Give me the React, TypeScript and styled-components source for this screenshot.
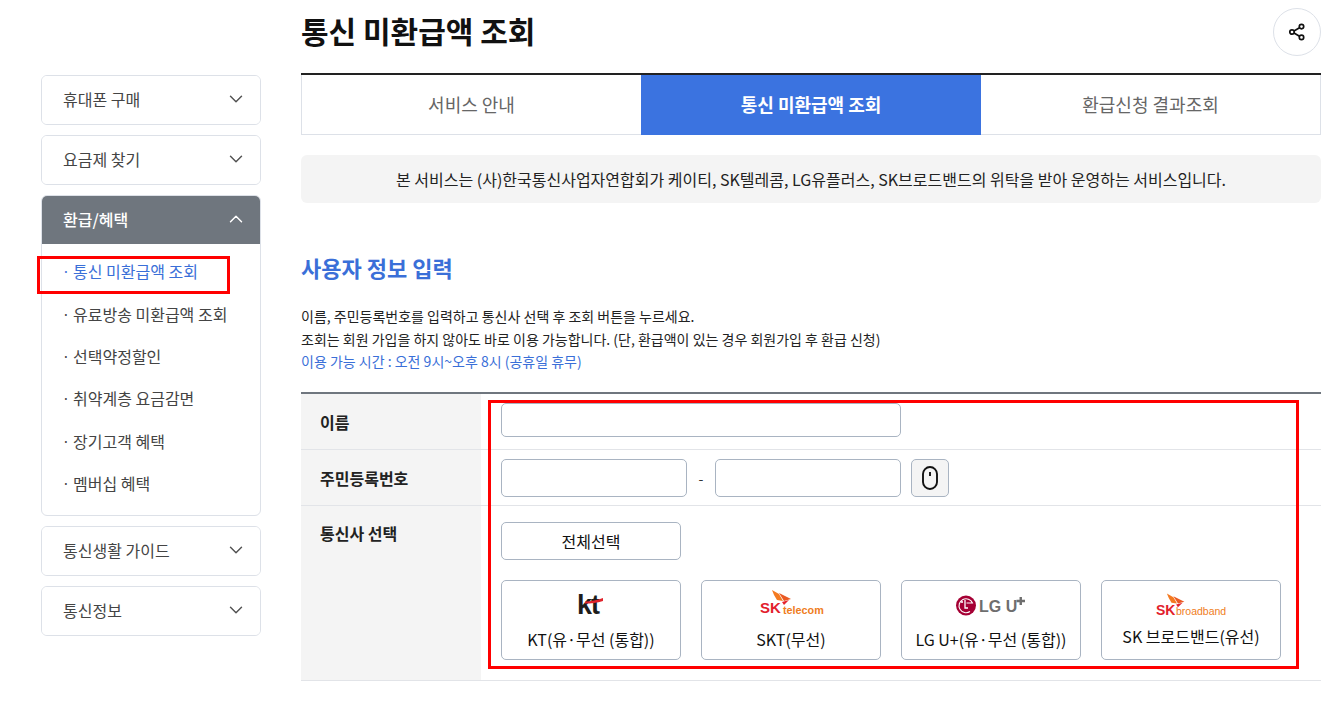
import React from "react";
import styled, { createGlobalStyle } from "styled-components";
import { ChevronDown, ChevronUp } from "lucide-react";

const GlobalStyle = createGlobalStyle`
  html, body {
    margin: 0;
    padding: 0;
    background: #fff;
    overflow: hidden;
  }
  * {
    box-sizing: border-box;
  }
  body {
    font-family: "Noto Sans CJK KR", "Noto Sans", sans-serif;
    color: #111;
  }
`;

const Page = styled.div`
  position: relative;
  display: flex;
  align-items: flex-start;
  width: 1336px;
  height: 708px;
  padding-left: 41px;
  overflow: hidden;
`;

const Sidebar = styled.nav`
  width: 220px;
  margin-top: 75px;
  margin-right: 40px;
  display: flex;
  flex-direction: column;
  gap: 10px;
  flex-shrink: 0;
`;

const MenuGroup = styled.div`
  border: 1px solid #dde1e8;
  border-radius: 6px;
  overflow: hidden;
`;

const MenuHead = styled.div<{ $open?: boolean }>`
  height: 48px;
  display: flex;
  align-items: center;
  justify-content: space-between;
  padding: 0 13px 2px 21px;
  font-size: 16px;
  font-weight: ${(p) => (p.$open ? 500 : 400)};
  background: ${(p) => (p.$open ? "#6f767e" : "#fff")};
  color: ${(p) => (p.$open ? "#fff" : "#444")};
`;

const SubList = styled.ul`
  list-style: none;
  margin: 0;
  padding: 6.2px 0 10.8px;
`;

const SubItem = styled.li<{ $active?: boolean }>`
  height: 42.3px;
  display: flex;
  align-items: center;
  padding-left: 20px;
  font-size: 16px;
  color: ${(p) => (p.$active ? "#3a6fd8" : "#444")};

  &::before {
    content: "·";
    width: 11px;
    font-size: 14px;
  }
`;

const Main = styled.main`
  width: 1020px;
  flex-shrink: 0;
`;

const TitleRow = styled.div`
  height: 73px;
  display: flex;
  justify-content: space-between;
  align-items: flex-start;
`;

const Title = styled.h1`
  margin: 6px 0 0;
  font-size: 30px;
  line-height: 48px;
  font-weight: 700;
  color: #111;
`;

const ShareButton = styled.button`
  width: 48px;
  height: 48px;
  margin-top: 8px;
  padding: 0;
  border: 1px solid #dde1e8;
  border-radius: 50%;
  background: #fff;
  display: flex;
  align-items: center;
  justify-content: center;
`;

const Tabs = styled.div`
  display: grid;
  grid-template-columns: repeat(3, 1fr);
  height: 62px;
  border-top: 2px solid #222;
`;

const Tab = styled.div<{ $active?: boolean; $first?: boolean; $last?: boolean }>`
  display: flex;
  align-items: center;
  justify-content: center;
  padding-bottom: 1px;
  font-size: 18px;
  font-weight: ${(p) => (p.$active ? 700 : 400)};
  color: ${(p) => (p.$active ? "#fff" : "#666")};
  background: ${(p) => (p.$active ? "#3b73e0" : "#fff")};
  border-bottom: 1px solid ${(p) => (p.$active ? "#3b73e0" : "#dde1e8")};
  border-left: ${(p) => (p.$first ? "1px solid #dde1e8" : "none")};
  border-right: ${(p) => (p.$last ? "1px solid #dde1e8" : "none")};
`;

const Notice = styled.div`
  margin-top: 20px;
  height: 48px;
  border-radius: 6px;
  background: #f4f4f4;
  display: flex;
  align-items: center;
  justify-content: center;
  font-size: 16px;
  color: #222;
`;

const SectionTitle = styled.h2`
  margin: 46px 0 0;
  font-size: 22px;
  line-height: 36px;
  font-weight: 700;
  color: #3a6fd8;
`;

const Guide = styled.div`
  margin-top: 20px;
  font-size: 14px;
  line-height: 23px;
  color: #222;
`;

const GuideTime = styled.div`
  line-height: 21px;
  color: #3a6fd8;
`;

const FormTable = styled.div`
  margin-top: 20px;
  border-top: 2px solid #6f767e;
  border-bottom: 1px solid #e2e4e8;
`;

const FormRow = styled.div<{ $height: number; $last?: boolean }>`
  display: flex;
  height: ${(p) => p.$height}px;
  border-bottom: ${(p) => (p.$last ? "none" : "1px solid #e2e4e8")};
`;

const RowLabel = styled.div<{ $top?: boolean }>`
  width: 180px;
  padding-left: 19px;
  background: #f4f4f4;
  display: flex;
  align-items: ${(p) => (p.$top ? "flex-start" : "center")};
  padding-top: ${(p) => (p.$top ? "15px" : "0")};
  font-size: 16px;
  font-weight: 700;
  color: #222;
`;

const RowBody = styled.div<{ $raise?: number }>`
  flex: 1;
  padding-left: 20px;
  padding-bottom: ${(p) => p.$raise ?? 0}px;
  display: flex;
  align-items: center;
`;

const TextInput = styled.div<{ $width: number; $height: number }>`
  width: ${(p) => p.$width}px;
  height: ${(p) => p.$height}px;
  border: 1px solid #a9b4c2;
  border-radius: 5px;
  background: #fff;
`;

const Dash = styled.span`
  width: 28px;
  text-align: center;
  font-size: 14px;
  color: #333;
`;

const KeypadButton = styled.div`
  width: 38px;
  height: 38px;
  margin-left: 10px;
  border: 1px solid #a9b4c2;
  border-radius: 5px;
  background: #f4f4f4;
  display: flex;
  align-items: center;
  justify-content: center;
`;

const CarrierBody = styled.div`
  flex: 1;
  padding: 16px 0 0 20px;
`;

const SelectAll = styled.div`
  width: 180px;
  height: 38px;
  border: 1px solid #a9b4c2;
  border-radius: 5px;
  display: flex;
  align-items: center;
  justify-content: center;
  font-size: 16px;
  color: #111;
`;

const CarrierGrid = styled.div`
  margin-top: 20px;
  display: flex;
  gap: 20px;
`;

const CarrierCard = styled.div`
  width: 180px;
  height: 80px;
  border: 1px solid #a9b4c2;
  border-radius: 5px;
  display: flex;
  flex-direction: column;
  align-items: center;
`;

const LogoSlot = styled.div<{ $height: number }>`
  height: ${(p) => p.$height}px;
  display: flex;
  align-items: center;
  justify-content: center;
`;

const CarrierName = styled.div`
  font-size: 16px;
  line-height: 24px;
  color: #111;
  white-space: nowrap;
`;

const Highlight = styled.div<{ $x: number; $y: number; $w: number; $h: number }>`
  position: absolute;
  left: ${(p) => p.$x}px;
  top: ${(p) => p.$y}px;
  width: ${(p) => p.$w}px;
  height: ${(p) => p.$h}px;
  border: 3px solid #ff0000;
  pointer-events: none;
`;

const logoFont = "Liberation Sans, sans-serif";

const KtLogo = () => (
  <svg width="34" height="30" viewBox="0 0 34 30">
    <text x="3" y="25" fontFamily={logoFont} fontSize="27" fontWeight="700" fill="#1d1d1d" letterSpacing="-1">
      kt
    </text>
    <path d="M11 12.5 C17 12.5 23 11 29 9 L29 12 C23 14 17 14.5 11 14.5 Z" fill="#e0242c" />
  </svg>
);

const SkWing = ({ x, y, scale = 1 }: { x: number; y: number; scale?: number }) => (
  <g transform={`translate(${x} ${y}) scale(${scale})`}>
    <path d="M1 0 L8 4 L12 11 L6 10 L3 5 Z" fill="#f47a20" />
    <path d="M8 3 L20 9 L13 11 Z" fill="#ea5a24" />
    <path d="M11 12 L18 10 L13 15 Z" fill="#e5232e" />
  </g>
);

const SktLogo = () => (
  <svg width="66" height="28" viewBox="0 0 66 28">
    <SkWing x={13} y={0} />
    <text x="2" y="23" fontFamily={logoFont} fontSize="15" fontWeight="700" fill="#e2202c">
      SK
    </text>
    <text x="25" y="24" fontFamily={logoFont} fontSize="10.8" fontWeight="700" fill="#ef7d22">
      telecom
    </text>
  </svg>
);

const LgLogo = () => (
  <svg width="72" height="24" viewBox="0 0 72 24">
    <circle cx="11" cy="13.5" r="10" fill="#a50034" />
    <path d="M15 19.5 A7 7 0 1 1 17.5 11 H11.5" fill="none" stroke="#fff" strokeWidth="1.1" />
    <path d="M10 8 V16 H13" fill="none" stroke="#fff" strokeWidth="1.3" />
    <circle cx="7" cy="10" r="1.1" fill="#fff" />
    <text x="24" y="20" fontFamily={logoFont} fontSize="16" fontWeight="700" fill="#6e6e6e">
      LG U
    </text>
    <path d="M61.5 9 H70 M65.75 5 V13" stroke="#6e6e6e" strokeWidth="2.4" />
  </svg>
);

const BroadbandLogo = () => (
  <svg width="72" height="28" viewBox="0 0 72 28">
    <SkWing x={11} y={4.5} scale={0.92} />
    <text x="1" y="26" fontFamily={logoFont} fontSize="14" fontWeight="700" fill="#e2202c">
      SK
    </text>
    <text x="21" y="26" fontFamily={logoFont} fontSize="10.5" fill="#ef7d22">
      broadband
    </text>
  </svg>
);

const ShareIcon = () => (
  <svg width="18" height="18" viewBox="0 0 18 18" fill="none" stroke="#111" strokeWidth="1.7">
    <circle cx="13.5" cy="3.6" r="2.2" />
    <circle cx="4" cy="9" r="2.2" />
    <circle cx="13.5" cy="14.4" r="2.2" />
    <path d="M6 8 L11.5 4.7 M6 10 L11.5 13.3" />
  </svg>
);

const MouseIcon = () => (
  <svg width="16" height="24" viewBox="0 0 16 24" fill="none" stroke="#111" strokeWidth="1.9">
    <rect x="1" y="1" width="14" height="22" rx="7" />
    <path d="M8 6 V10" />
  </svg>
);

const subMenus = ["통신 미환급액 조회", "유료방송 미환급액 조회", "선택약정할인", "취약계층 요금감면", "장기고객 혜택", "멤버십 혜택"];

const carriers = [
  { name: "KT(유·무선 (통합))", logo: <KtLogo />, slot: 46 },
  { name: "SKT(무선)", logo: <SktLogo />, slot: 46 },
  { name: "LG U+(유·무선 (통합))", logo: <LgLogo />, slot: 46 },
  { name: "SK 브로드밴드(유선)", logo: <BroadbandLogo />, slot: 43 },
];

const ClosedMenu = ({ label }: { label: string }) => (
  <MenuGroup>
    <MenuHead>
      {label}
      <ChevronDown size={22} strokeWidth={1.6} color="#555" />
    </MenuHead>
  </MenuGroup>
);

const App = () => {
  return (
    <Page>
      <GlobalStyle />
      <Sidebar>
        <ClosedMenu label="휴대폰 구매" />
        <ClosedMenu label="요금제 찾기" />
        <MenuGroup>
          <MenuHead $open>
            환급/혜택
            <ChevronUp size={22} strokeWidth={1.6} color="#fff" />
          </MenuHead>
          <SubList>
            {subMenus.map((item, i) => (
              <SubItem key={item} $active={i === 0}>
                {item}
              </SubItem>
            ))}
          </SubList>
        </MenuGroup>
        <ClosedMenu label="통신생활 가이드" />
        <ClosedMenu label="통신정보" />
      </Sidebar>

      <Main>
        <TitleRow>
          <Title>통신 미환급액 조회</Title>
          <ShareButton>
            <ShareIcon />
          </ShareButton>
        </TitleRow>

        <Tabs>
          <Tab $first>서비스 안내</Tab>
          <Tab $active>통신 미환급액 조회</Tab>
          <Tab $last>환급신청 결과조회</Tab>
        </Tabs>

        <Notice>본 서비스는 (사)한국통신사업자연합회가 케이티, SK텔레콤, LG유플러스, SK브로드밴드의 위탁을 받아 운영하는 서비스입니다.</Notice>

        <SectionTitle>사용자 정보 입력</SectionTitle>

        <Guide>
          <div>이름, 주민등록번호를 입력하고 통신사 선택 후 조회 버튼을 누르세요.</div>
          <div>조회는 회원 가입을 하지 않아도 바로 이용 가능합니다. (단, 환급액이 있는 경우 회원가입 후 환급 신청)</div>
          <GuideTime>이용 가능 시간 : 오전 9시~오후 8시 (공휴일 휴무)</GuideTime>
        </Guide>

        <FormTable>
          <FormRow $height={56}>
            <RowLabel>이름</RowLabel>
            <RowBody $raise={3}>
              <TextInput $width={400} $height={34} />
            </RowBody>
          </FormRow>
          <FormRow $height={56}>
            <RowLabel>주민등록번호</RowLabel>
            <RowBody>
              <TextInput $width={186} $height={38} />
              <Dash>-</Dash>
              <TextInput $width={186} $height={38} />
              <KeypadButton>
                <MouseIcon />
              </KeypadButton>
            </RowBody>
          </FormRow>
          <FormRow $height={174} $last>
            <RowLabel $top>통신사 선택</RowLabel>
            <CarrierBody>
              <SelectAll>전체선택</SelectAll>
              <CarrierGrid>
                {carriers.map((c) => (
                  <CarrierCard key={c.name}>
                    <LogoSlot $height={c.slot}>{c.logo}</LogoSlot>
                    <CarrierName>{c.name}</CarrierName>
                  </CarrierCard>
                ))}
              </CarrierGrid>
            </CarrierBody>
          </FormRow>
        </FormTable>
      </Main>

      <Highlight $x={37} $y={256} $w={193} $h={38} />
      <Highlight $x={488} $y={400} $w={811} $h={269} />
    </Page>
  );
};

export default App;
